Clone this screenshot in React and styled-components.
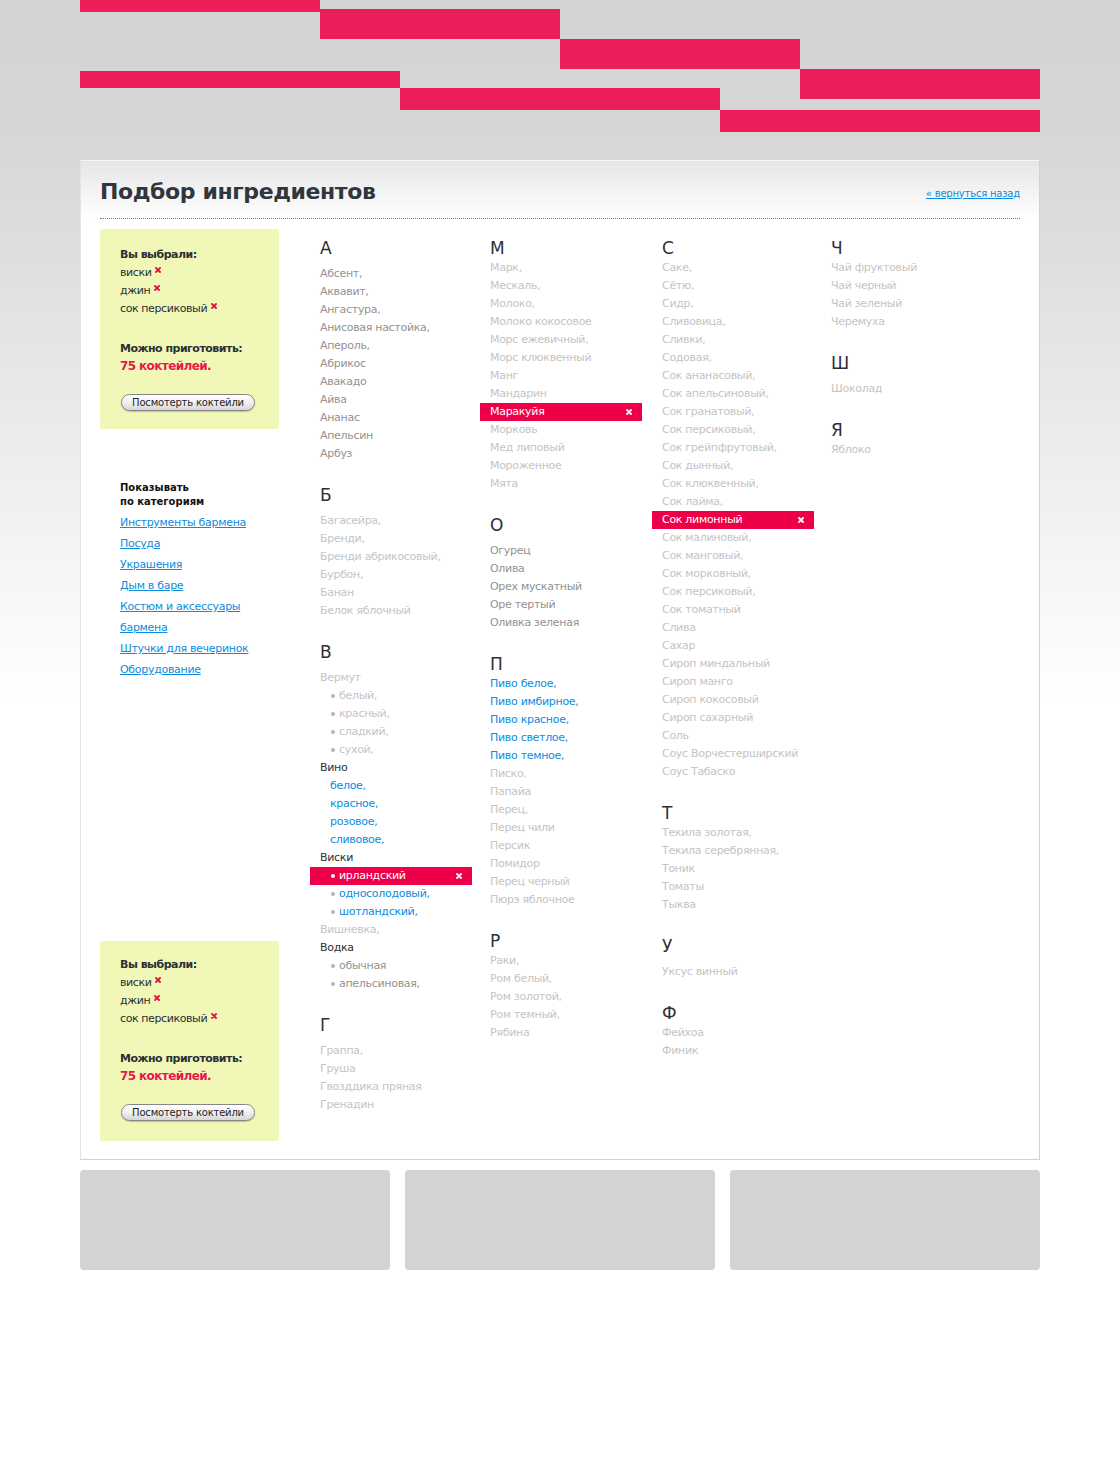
import React from 'react'
import styled, { createGlobalStyle } from 'styled-components'

const GlobalStyle = createGlobalStyle`
  html {
    background: #fff;
  }
  body {
    margin: 0;
    font-family: "DejaVu Sans", Verdana, sans-serif;
    background: linear-gradient(to bottom, #d4d4d4 0px, #d6d6d6 120px, #dfdfdf 260px, #ffffff 700px) no-repeat;
    background-color: #fff;
  }
`

const PINK = '#ec1e5a'
const RED = '#ee0048'
const BLUE = '#0b8ce0'

const tones = {
  mid: '#929292',
  light: '#c4c4c4',
  link: BLUE,
  parent: '#2b3035',
}

// data
const L = (text, extra = {}) => ({ text, tone: 'light', ...extra })
const M = (text, extra = {}) => ({ text, tone: 'mid', ...extra })
const B = (text, extra = {}) => ({ text, tone: 'link', ...extra })

const columns = [
  [
    { letter: 'А', loose: true, items: ['Абсент,', 'Аквавит,', 'Ангастура,', 'Анисовая настойка,', 'Апероль,', 'Абрикос', 'Авакадо', 'Айва', 'Ананас', 'Апельсин', 'Арбуз'].map(t => M(t)) },
    { letter: 'Б', loose: true, items: ['Багасейра,', 'Бренди,', 'Бренди абрикосовый,', 'Бурбон,', 'Банан', 'Белок яблочный'].map(t => L(t)) },
    {
      letter: 'В', loose: true, items: [
        L('Вермут'),
        L('белый,', { sub: true, bullet: true }),
        L('красный,', { sub: true, bullet: true }),
        L('сладкий,', { sub: true, bullet: true }),
        L('сухой,', { sub: true, bullet: true }),
        { text: 'Вино', tone: 'parent' },
        B('белое,', { sub: true }),
        B('красное,', { sub: true }),
        B('розовое,', { sub: true }),
        B('сливовое,', { sub: true }),
        { text: 'Виски', tone: 'parent' },
        L('ирландский', { sub: true, bullet: true, selected: true }),
        B('односолодовый,', { sub: true, bullet: true }),
        B('шотландский,', { sub: true, bullet: true }),
        L('Вишневка,'),
        { text: 'Водка', tone: 'parent' },
        M('обычная', { sub: true, bullet: true }),
        M('апельсиновая,', { sub: true, bullet: true }),
      ],
    },
    { letter: 'Г', loose: true, items: ['Граппа,', 'Груша', 'Гвозддика пряная', 'Гренадин'].map(t => L(t)) },
  ],
  [
    {
      letter: 'М', items: ['Марк,', 'Мескаль,', 'Молоко,', 'Молоко кокосовое', 'Морс ежевичный,', 'Морс клюквенный', 'Манг', 'Мандарин', 'Маракуйя', 'Морковь', 'Мед липовый', 'Мороженное', 'Мята']
        .map(t => L(t, { selected: t === 'Маракуйя' })),
    },
    { letter: 'О', loose: true, items: ['Огурец', 'Олива', 'Орех мускатный', 'Оре тертый', 'Оливка зеленая'].map(t => M(t)) },
    {
      letter: 'П', items: [
        ...['Пиво белое,', 'Пиво имбирное,', 'Пиво красное,', 'Пиво светлое,', 'Пиво темное,'].map(t => B(t)),
        ...['Писко,', 'Папайа', 'Перец,', 'Перец чили', 'Персик', 'Помидор', 'Перец черный', 'Пюрэ яблочное'].map(t => L(t)),
      ],
    },
    { letter: 'Р', items: ['Раки,', 'Ром белый,', 'Ром золотой,', 'Ром темный,', 'Рябина'].map(t => L(t)) },
  ],
  [
    {
      letter: 'С', items: ['Саке,', 'Сётю,', 'Сидр,', 'Сливовица,', 'Сливки,', 'Содовая,', 'Сок ананасовый,', 'Сок апельсиновый,', 'Сок гранатовый,', 'Сок персиковый,', 'Сок грейпфрутовый,', 'Сок дынный,', 'Сок клюквенный,', 'Сок лайма,', 'Сок лимонный', 'Сок малиновый,', 'Сок манговый,', 'Сок морковный,', 'Сок персиковый,', 'Сок томатный', 'Слива', 'Сахар', 'Сироп миндальный', 'Сироп манго', 'Сироп кокосовый', 'Сироп сахарный', 'Соль', 'Соус Ворчестерширский', 'Соус Табаско']
        .map(t => L(t, { selected: t === 'Сок лимонный' })),
    },
    { letter: 'Т', items: ['Текила золотая,', 'Текила серебрянная,', 'Тоник', 'Томаты', 'Тыква'].map(t => L(t)) },
    { letter: 'У', loose: true, items: [L('Уксус винный')] },
    { letter: 'Ф', items: [L('Фейхоа'), L('Финик')] },
  ],
  [
    { letter: 'Ч', items: ['Чай фруктовый', 'Чай черный', 'Чай зеленый', 'Черемуха'].map(t => L(t)) },
    { letter: 'Ш', loose: true, items: [L('Шоколад')] },
    { letter: 'Я', items: [L('Яблоко')] },
  ],
]

const categories = ['Инструменты бармена', 'Посуда', 'Украшения', 'Дым в баре', 'Костюм и аксессуары бармена', 'Штучки для вечеринок', 'Оборудование']
const chosen = ['виски', 'джин', 'сок персиковый']

// icons
const Cross = ({ color, size = 6 }) => (
  <svg width={size} height={size} viewBox="0 0 6 6">
    <path d="M1 1L5 5M5 1L1 5" stroke={color} strokeWidth="1.8" strokeLinecap="square" />
  </svg>
)

const Stripes = () => (
  <svg width="960" height="132" viewBox="0 0 960 132">
    <rect x="0" y="0" width="240" height="12" fill={PINK} />
    <rect x="240" y="9" width="240" height="30" fill={PINK} />
    <rect x="480" y="39" width="240" height="30" fill={PINK} />
    <rect x="720" y="69" width="240" height="30" fill={PINK} />
    <rect x="0" y="71" width="320" height="17" fill={PINK} />
    <rect x="320" y="88" width="320" height="22" fill={PINK} />
    <rect x="640" y="110" width="320" height="22" fill={PINK} />
  </svg>
)

const SelectionPanel = ({ bottom }) => (
  <SelectionBox $bottom={bottom}>
    <BoxTitle>Вы выбрали:</BoxTitle>
    {chosen.map(c => (
      <ChosenItem key={c}>
        {c}
        <ChosenCross><Cross color="#e0103f" /></ChosenCross>
      </ChosenItem>
    ))}
    <CanMake>
      <BoxTitle>Можно приготовить:</BoxTitle>
      <Count>75 коктейлей.</Count>
    </CanMake>
    <ViewButton>Посмотерть коктейли</ViewButton>
  </SelectionBox>
)

export default function App () {
  return (
    <>
      <GlobalStyle />
      <Page>
        <Header><Stripes /></Header>
        <Card>
          <CardHead>
            <Title>Подбор ингредиентов</Title>
            <BackLink href="#">« вернуться назад</BackLink>
          </CardHead>
          <Content>
            <Sidebar>
              <SelectionPanel />
              <Categories>
                <CatHeading>Показывать<br />по категориям</CatHeading>
                <CatList>
                  {categories.map(c => <CatLink key={c} href="#">{c}</CatLink>)}
                </CatList>
              </Categories>
              <SelectionPanel bottom />
            </Sidebar>
            <Columns>
              {columns.map((col, i) => (
                <Column key={i}>
                  {col.map(group => (
                    <Group key={group.letter}>
                      <Letter $loose={group.loose}>{group.letter}</Letter>
                      <ItemList>
                        {group.items.map((it, j) => (
                          <Item key={j} $tone={it.tone} $sub={it.sub} $selected={it.selected}>
                            {it.bullet && <Bullet $selected={it.selected} />}
                            <span>{it.text}</span>
                            {it.selected && <ItemCross><Cross color="#fff" /></ItemCross>}
                          </Item>
                        ))}
                      </ItemList>
                    </Group>
                  ))}
                </Column>
              ))}
            </Columns>
          </Content>
        </Card>
        <Teasers>
          <Teaser />
          <Teaser />
          <Teaser />
        </Teasers>
      </Page>
    </>
  )
}

const Page = styled.div`
  width: 960px;
  margin: 0 auto;
  padding-bottom: 193px;
`

const Header = styled.header`
  height: 160px;

  svg {
    display: block;
  }
`

const Card = styled.section`
  border: 1px solid #d2d2d2;
  border-top-color: #f6f6f6;
  border-left-color: #e4e4e4;
  background: linear-gradient(to bottom, #e6e6e6 0px, #ffffff 58px);
  padding: 0 19px 18px;
`

const CardHead = styled.div`
  display: flex;
  justify-content: space-between;
  align-items: center;
  padding: 16px 0 11px;
  border-bottom: 1px dotted #7c7c7c;
`

const Title = styled.h1`
  margin: 0;
  font-size: 22px;
  line-height: 30px;
  font-weight: bold;
  color: #30363d;
  letter-spacing: -0.4px;
`

const BackLink = styled.a`
  font-size: 10px;
  color: ${BLUE};
  text-decoration: underline;
  margin-top: 2px;
  letter-spacing: -0.2px;
`

const Content = styled.div`
  display: flex;
  margin-top: 10px;
`

const Sidebar = styled.aside`
  width: 179px;
  flex-shrink: 0;
  display: flex;
  flex-direction: column;
`

const SelectionBox = styled.div`
  background: #f1f7b7;
  border-radius: 2px;
  padding: ${p => (p.$bottom ? '15px 20px 20px' : '17px 20px 18px')};
  margin-top: ${p => (p.$bottom ? 'auto' : '0')};
  font-size: 11px;
  line-height: 18px;
  letter-spacing: -0.4px;
  color: #2b2f33;
`

const BoxTitle = styled.div`
  font-weight: bold;
  letter-spacing: -0.5px;
`

const ChosenItem = styled.div`
  display: flex;
  align-items: flex-start;
`

const ChosenCross = styled.span`
  margin-left: 4px;
  margin-top: 3px;
  line-height: 0;
`

const CanMake = styled.div`
  margin-top: 22px;
`

const Count = styled.div`
  font-size: 12px;
  line-height: 16px;
  font-weight: bold;
  letter-spacing: -0.6px;
  color: #e8184c;
`

const ViewButton = styled.button`
  display: block;
  margin: 20px 0 0 1px;
  width: 134px;
  height: 17px;
  padding: 0;
  border: 1px solid #858585;
  border-radius: 9px;
  background: linear-gradient(to bottom, #ffffff 0%, #f3f3f3 45%, #d6d6d6 100%);
  box-shadow: inset 0 1px 0 #fff, 0 1px 1px rgba(0, 0, 0, 0.2);
  font-family: "DejaVu Sans", Verdana, sans-serif;
  font-size: 10px;
  line-height: 15px;
  letter-spacing: -0.2px;
  color: #222;
  cursor: pointer;
`

const Categories = styled.div`
  padding: 52px 20px 0;
`

const CatHeading = styled.div`
  font-size: 10px;
  line-height: 14px;
  font-weight: bold;
  color: #111;
`

const CatList = styled.div`
  margin-top: 3px;
`

const CatLink = styled.a`
  display: block;
  font-size: 11px;
  line-height: 21px;
  letter-spacing: -0.3px;
  color: ${BLUE};
  text-decoration: underline;
`

const Columns = styled.div`
  margin-left: 31px;
  display: grid;
  grid-template-columns: 170px 172px 169px 170px;
  align-items: start;
  padding: 8px 0 27px;
`

const Column = styled.div`
  display: flex;
  flex-direction: column;
  gap: 21px;
`

const Group = styled.div``

const Letter = styled.div`
  padding-left: 10px;
  font-size: 17px;
  line-height: 22px;
  color: #2b3035;
  margin-bottom: ${p => (p.$loose ? '6px' : '0')};
`

const ItemList = styled.ul`
  list-style: none;
  margin: 0;
  padding: 0;
`

const Item = styled.li`
  display: flex;
  align-items: center;
  width: 162px;
  height: 18px;
  box-sizing: border-box;
  padding-left: ${p => (p.$sub ? '20px' : '10px')};
  font-size: 11px;
  line-height: 18px;
  letter-spacing: -0.3px;
  white-space: nowrap;
  color: ${p => (p.$selected ? '#fff' : tones[p.$tone])};
  background: ${p => (p.$selected ? RED : 'transparent')};
`

const Bullet = styled.i`
  display: inline-block;
  width: 4px;
  height: 4px;
  border-radius: 50%;
  margin: 0 4px 0 1px;
  background: ${p => (p.$selected ? '#fff' : '#b4b4b4')};
`

const ItemCross = styled.span`
  margin-left: auto;
  margin-right: 10px;
  line-height: 0;
`

const Teasers = styled.div`
  display: grid;
  grid-template-columns: repeat(3, 1fr);
  gap: 15px;
  margin-top: 10px;
`

const Teaser = styled.div`
  height: 100px;
  border-radius: 4px;
  background: #d3d3d3;
`
